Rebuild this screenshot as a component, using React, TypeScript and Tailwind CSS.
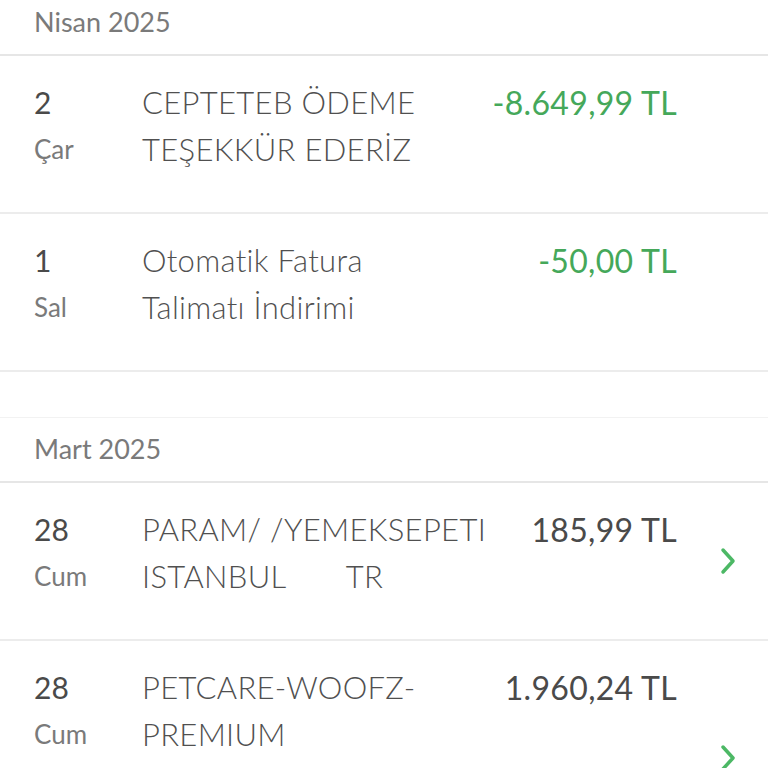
type Txn = {
  day: string;
  weekday: string;
  lines: string[];
  amount: string;
  credit?: boolean;
  link?: boolean;
  tall?: boolean;
};

const sections: { title: string; items: Txn[] }[] = [
  {
    title: 'Nisan 2025',
    items: [
      { day: '2', weekday: 'Çar', lines: ['CEPTETEB ÖDEME', 'TEŞEKKÜR EDERİZ'], amount: '-8.649,99 TL', credit: true },
      { day: '1', weekday: 'Sal', lines: ['Otomatik Fatura', 'Talimatı İndirimi'], amount: '-50,00 TL', credit: true },
    ],
  },
  {
    title: 'Mart 2025',
    items: [
      { day: '28', weekday: 'Cum', lines: ['PARAM/ /YEMEKSEPETI', 'ISTANBUL\u00a0\u00a0\u00a0\u00a0\u00a0\u00a0\u00a0TR'], amount: '185,99 TL', link: true },
      {
        day: '28',
        weekday: 'Cum',
        lines: ['PETCARE-WOOFZ-', 'PREMIUM', 'ISTANBUL\u00a0\u00a0\u00a0\u00a0\u00a0\u00a0\u00a0TR'],
        amount: '1.960,24 TL',
        link: true,
        tall: true,
      },
    ],
  },
];

function Chevron() {
  return (
    <svg width="16" height="28" viewBox="0 0 16 28" fill="none" className="text-[#4cb865]">
      <path d="M3 3 L13 14 L3 25" stroke="currentColor" strokeWidth="3.5" strokeLinecap="round" strokeLinejoin="round" />
    </svg>
  );
}

function Row({ txn }: { txn: Txn }) {
  return (
    <div className="flex border-b-2 border-[#ececec] bg-white pl-[34px]">
      <div className={`flex flex-1 pt-[23px] ${txn.tall ? 'pb-[69px]' : 'pb-[39px]'}`}>
        <div className="w-[108px] shrink-0 leading-[47px]">
          <div className="text-[30px] text-[#4a4a4a]">{txn.day}</div>
          <div className="text-[26px] text-[#7a7a7a]">{txn.weekday}</div>
        </div>
        <div className="flex-1 text-[31px] font-light leading-[47px] tracking-[0.01em] text-[#505050]">
          {txn.lines.map((line) => (
            <div key={line} className="whitespace-nowrap">{line}</div>
          ))}
        </div>
        <div
          className={`text-right text-[32px] font-normal leading-[47px] tracking-[0.01em] ${
            txn.credit ? 'text-[#45a85a]' : 'text-[#4a4a4a]'
          }`}
        >
          {txn.amount}
        </div>
      </div>
      <div className="flex w-[91px] shrink-0 items-center justify-end pr-[32px]">
        {txn.link && <Chevron />}
      </div>
    </div>
  );
}

export default function App() {
  return (
    <div
      className="h-[768px] w-[768px] overflow-hidden bg-white"
      style={{ fontFamily: 'Lato, "Open Sans", sans-serif' }}
    >
      {sections.map((section, i) => (
        <div key={section.title}>
          {i > 0 && <div className="h-[46px] border-b border-[#f2f2f2] bg-white" />}
          <div
            className={`flex h-[65px] items-center border-b-2 border-[#e6e6e6] bg-white pl-[34px] text-[27px] text-[#7a7a7a] ${
              i === 0 ? '-mt-[9px]' : ''
            }`}
          >
            {section.title}
          </div>
          {section.items.map((txn, j) => (
            <Row key={j} txn={txn} />
          ))}
        </div>
      ))}
    </div>
  );
}
